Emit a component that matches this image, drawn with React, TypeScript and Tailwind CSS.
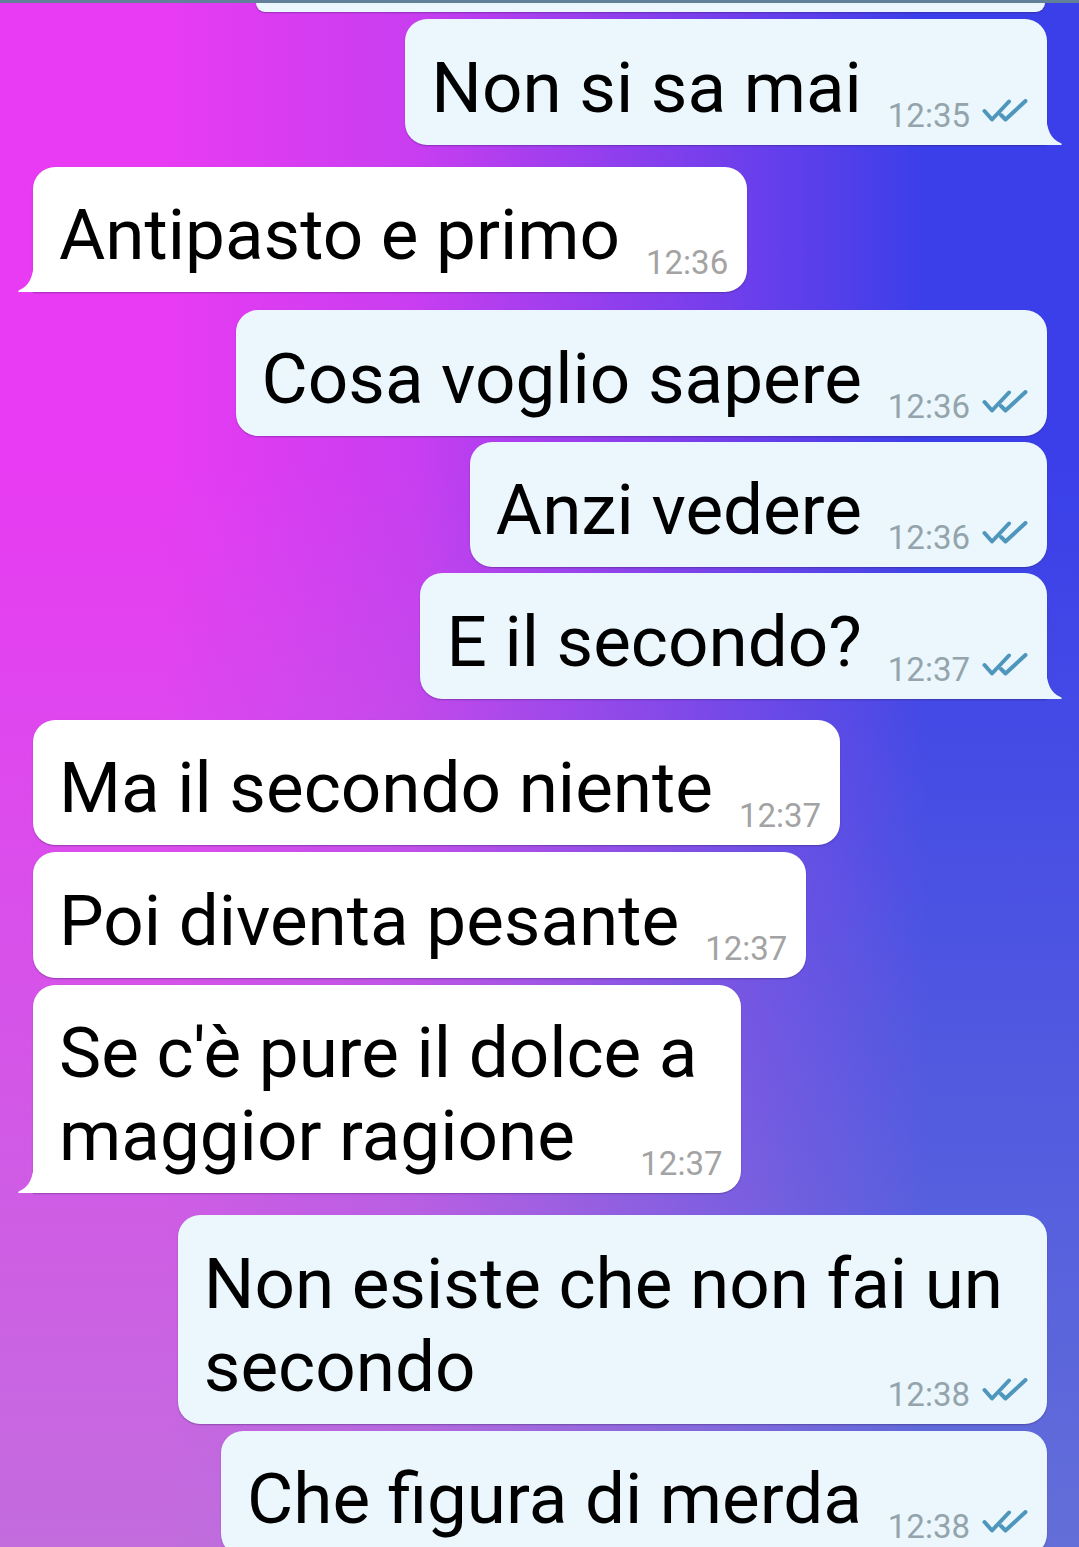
import React from "react";

type Msg = {
  out: boolean;
  lines: string[];
  time: string;
  tail?: boolean;
  mt: string;
};

const messages: Msg[] = [
  { out: true, lines: ["Non si sa mai"], time: "12:35", tail: true, mt: "mt-[7px]" },
  { out: false, lines: ["Antipasto e primo"], time: "12:36", tail: true, mt: "mt-[22px]" },
  { out: true, lines: ["Cosa voglio sapere"], time: "12:36", mt: "mt-[18px]" },
  { out: true, lines: ["Anzi vedere"], time: "12:36", mt: "mt-[6px]" },
  { out: true, lines: ["E il secondo?"], time: "12:37", tail: true, mt: "mt-[6px]" },
  { out: false, lines: ["Ma il secondo niente"], time: "12:37", mt: "mt-[21px]" },
  { out: false, lines: ["Poi diventa pesante"], time: "12:37", mt: "mt-[7px]" },
  { out: false, lines: ["Se c'è pure il dolce a", "maggior ragione"], time: "12:37", tail: true, mt: "mt-[7px]" },
  { out: true, lines: ["Non esiste che non fai un", "secondo"], time: "12:38", mt: "mt-[22px]" },
  { out: true, lines: ["Che figura di merda"], time: "12:38", mt: "mt-[7px]" },
];

function DoubleCheck() {
  return (
    <svg width="46" height="24" viewBox="0 0 46 24" className="mb-[12px] shrink-0" fill="none">
      <path d="M2.5 12 L10 20.5 L27 2.5" stroke="#4f96bc" strokeWidth="4" strokeLinecap="round" strokeLinejoin="round" />
      <path d="M19 16 L23.5 20.5 L43.5 2" stroke="#4f96bc" strokeWidth="4" strokeLinecap="round" strokeLinejoin="round" />
    </svg>
  );
}

function Tail({ out }: { out: boolean }) {
  return (
    <svg
      width="17"
      height="32"
      viewBox="0 0 17 32"
      className={
        out
          ? "absolute bottom-0 right-[-16px]"
          : "absolute bottom-0 left-[-16px] -scale-x-100"
      }
    >
      <path
        d="M0 0 C0.5 17 5 26 14.5 30 C16.5 30.8 16.3 32 14.5 32 L0 32 Z"
        fill={out ? "#ebf7fc" : "#ffffff"}
      />
    </svg>
  );
}

function Bubble({ m }: { m: Msg }) {
  const last = m.lines[m.lines.length - 1];
  const rest = m.lines.slice(0, -1);
  return (
    <div className={`flex ${m.out ? "justify-end pr-[32px]" : "justify-start pl-[33px]"} ${m.mt}`}>
      <div
        className={`relative flex flex-col pl-[26px] pr-[19px] pt-[26.5px] pb-[16px] shadow-[0_1px_1.5px_rgba(40,20,80,0.35)] ${
          m.out ? "bg-[#ebf7fc]" : "bg-white"
        } ${
          m.tail
            ? m.out
              ? "rounded-[22px] rounded-br-none"
              : "rounded-[22px] rounded-bl-none"
            : "rounded-[22px]"
        }`}
      >
        {rest.map((l) => (
          <div key={l} className="pr-[25px] text-[71px] leading-[83px] text-black whitespace-nowrap">
            {l}
          </div>
        ))}
        <div className="flex items-end justify-between">
          <span className="text-[71px] leading-[83px] text-black whitespace-nowrap">{last}</span>
          <div className="ml-[26px] flex items-end gap-[12px] translate-y-[6px]">
            <span
              className={`text-[33px] leading-[38px] whitespace-nowrap ${
                m.out ? "text-[#93a4ac]" : "text-[#a3a3a3]"
              }`}
            >
              {m.time}
            </span>
            {m.out && <DoubleCheck />}
          </div>
        </div>
        {m.tail && <Tail out={m.out} />}
      </div>
    </div>
  );
}

export default function App() {
  return (
    <div className="relative h-[1547px] w-full overflow-hidden font-[Roboto,sans-serif] bg-[image:linear-gradient(to_bottom,rgba(150,168,196,0)_30%,rgba(150,168,196,0.45)_100%),linear-gradient(90deg,#e83bf3_15%,#c93ef0_38%,#3a3fe9_86%)]">
      <div className="h-[3px] w-full bg-[#62809a]" />
      <div className="flex justify-end pr-[34px]">
        <div className="h-[9px] w-[789px] rounded-b-[11px] bg-[#ebf7fc] shadow-[0_1px_1.5px_rgba(40,20,80,0.35)]" />
      </div>
      {messages.map((m, i) => (
        <Bubble key={i} m={m} />
      ))}
    </div>
  );
}
